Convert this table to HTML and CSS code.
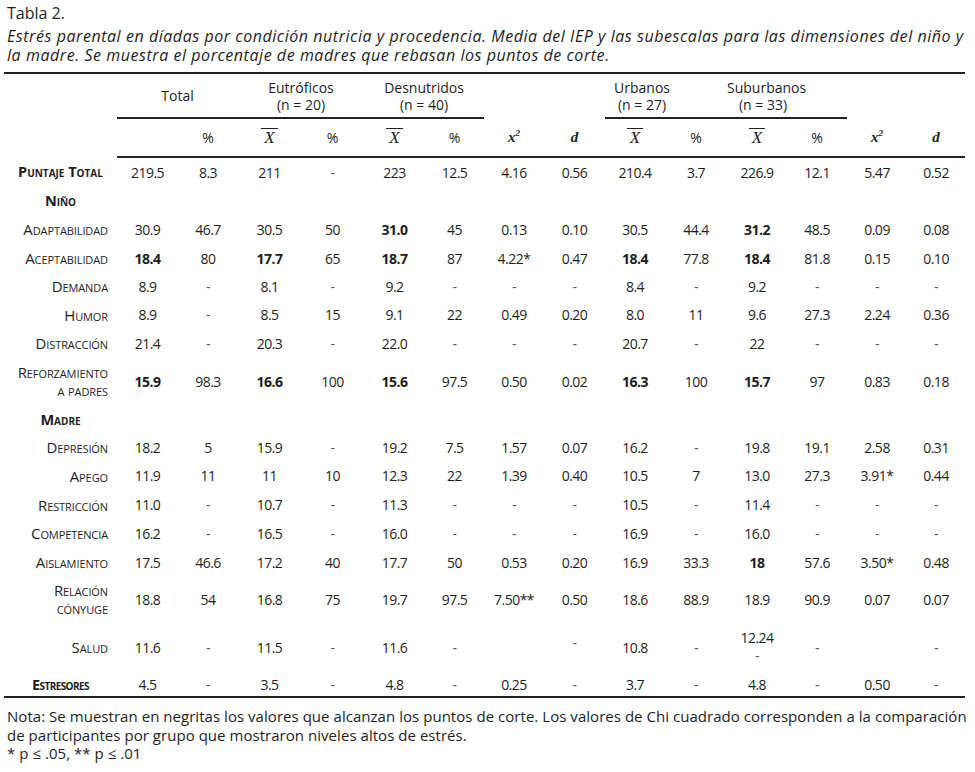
FILE: index.html
```html
<!DOCTYPE html>
<html lang="es">
<head>
<meta charset="utf-8">
<title>Tabla 2</title>
<link rel="stylesheet" href="styles.css">
</head>
<body>
<div class="page">
  <p class="title">Tabla 2.</p>
  <p class="caption">Estrés parental en díadas por condición nutricia y procedencia. Media del IEP y las subescalas para las dimensiones del niño y<br>la madre. Se muestra el porcentaje de madres que rebasan los puntos de corte.</p>
  <table class="data">
    <colgroup>
      <col class="w-label">
      <col class="w61"><col class="w60"><col class="w63"><col class="w63"><col class="w61"><col class="w59"><col class="w60">
      <col class="w61"><col class="w60"><col class="w62"><col class="w60"><col class="w60"><col class="w60"><col class="w58">
    </colgroup>
    <thead>
      <tr class="hrow1">
        <th></th>
        <th colspan="2" class="grp">Total</th>
        <th colspan="2" class="grp"><span class="gl">Eutróficos</span><span class="gl">(n = 20)</span></th>
        <th colspan="2" class="grp"><span class="gl">Desnutridos</span><span class="gl">(n = 40)</span></th>
        <th colspan="2"></th>
        <th colspan="2" class="grp shift"><span class="gl">Urbanos</span><span class="gl">(n = 27)</span></th>
        <th colspan="2" class="grp shift"><span class="gl">Suburbanos</span><span class="gl">(n = 33)</span></th>
        <th colspan="2"></th>
      </tr>
      <tr class="hrow2">
        <th></th>
        <th class="sub"></th>
        <th class="sub">%</th>
        <th class="sub"><span class="xbar">X</span></th>
        <th class="sub">%</th>
        <th class="sub"><span class="xbar">X</span></th>
        <th class="sub">%</th>
        <th class="sub stat">x<sup>2</sup></th>
        <th class="sub stat">d</th>
        <th class="sub"><span class="xbar">X</span></th>
        <th class="sub">%</th>
        <th class="sub"><span class="xbar">X</span></th>
        <th class="sub">%</th>
        <th class="sub stat">x<sup>2</sup></th>
        <th class="sub stat">d</th>
      </tr>
    </thead>
    <tbody>
      <tr class="r29">
        <th class="sect">Puntaje Total</th>
        <td>219.5</td><td>8.3</td><td>211</td><td class="dash">-</td><td>223</td><td>12.5</td><td>4.16</td><td>0.56</td>
        <td>210.4</td><td>3.7</td><td>226.9</td><td>12.1</td><td>5.47</td><td>0.52</td>
      </tr>
      <tr class="r28">
        <th class="sect">Niño</th>
        <td></td><td></td><td></td><td></td><td></td><td></td><td></td><td></td><td></td><td></td><td></td><td></td><td></td><td></td>
      </tr>
      <tr class="r30">
        <th class="lab">Adaptabilidad</th>
        <td>30.9</td><td>46.7</td><td>30.5</td><td>50</td><td class="b">31.0</td><td>45</td><td>0.13</td><td>0.10</td>
        <td>30.5</td><td>44.4</td><td class="b">31.2</td><td>48.5</td><td>0.09</td><td>0.08</td>
      </tr>
      <tr class="r28">
        <th class="lab">Aceptabilidad</th>
        <td class="b">18.4</td><td>80</td><td class="b">17.7</td><td>65</td><td class="b">18.7</td><td>87</td><td>4.22*</td><td>0.47</td>
        <td class="b">18.4</td><td>77.8</td><td class="b">18.4</td><td>81.8</td><td>0.15</td><td>0.10</td>
      </tr>
      <tr class="r28">
        <th class="lab">Demanda</th>
        <td>8.9</td><td class="dash">-</td><td>8.1</td><td class="dash">-</td><td>9.2</td><td class="dash">-</td><td class="dash">-</td><td class="dash">-</td>
        <td>8.4</td><td class="dash">-</td><td>9.2</td><td class="dash">-</td><td class="dash">-</td><td class="dash">-</td>
      </tr>
      <tr class="r29">
        <th class="lab">Humor</th>
        <td>8.9</td><td class="dash">-</td><td>8.5</td><td>15</td><td>9.1</td><td>22</td><td>0.49</td><td>0.20</td>
        <td>8.0</td><td>11</td><td>9.6</td><td>27.3</td><td>2.24</td><td>0.36</td>
      </tr>
      <tr class="r28">
        <th class="lab">Distracción</th>
        <td>21.4</td><td class="dash">-</td><td>20.3</td><td class="dash">-</td><td>22.0</td><td class="dash">-</td><td class="dash">-</td><td class="dash">-</td>
        <td>20.7</td><td class="dash">-</td><td>22</td><td class="dash">-</td><td class="dash">-</td><td class="dash">-</td>
      </tr>
      <tr class="r48">
        <th class="lab two">Reforzamiento<br>a padres</th>
        <td class="b">15.9</td><td>98.3</td><td class="b">16.6</td><td>100</td><td class="b">15.6</td><td>97.5</td><td>0.50</td><td>0.02</td>
        <td class="b">16.3</td><td>100</td><td class="b">15.7</td><td>97</td><td>0.83</td><td>0.18</td>
      </tr>
      <tr class="r28">
        <th class="sect">Madre</th>
        <td></td><td></td><td></td><td></td><td></td><td></td><td></td><td></td><td></td><td></td><td></td><td></td><td></td><td></td>
      </tr>
      <tr class="r28">
        <th class="lab">Depresión</th>
        <td>18.2</td><td>5</td><td>15.9</td><td class="dash">-</td><td>19.2</td><td>7.5</td><td>1.57</td><td>0.07</td>
        <td>16.2</td><td class="dash">-</td><td>19.8</td><td>19.1</td><td>2.58</td><td>0.31</td>
      </tr>
      <tr class="r29">
        <th class="lab">Apego</th>
        <td>11.9</td><td>11</td><td>11</td><td>10</td><td>12.3</td><td>22</td><td>1.39</td><td>0.40</td>
        <td>10.5</td><td>7</td><td>13.0</td><td>27.3</td><td>3.91*</td><td>0.44</td>
      </tr>
      <tr class="r29">
        <th class="lab">Restricción</th>
        <td>11.0</td><td class="dash">-</td><td>10.7</td><td class="dash">-</td><td>11.3</td><td class="dash">-</td><td class="dash">-</td><td class="dash">-</td>
        <td>10.5</td><td class="dash">-</td><td>11.4</td><td class="dash">-</td><td class="dash">-</td><td class="dash">-</td>
      </tr>
      <tr class="r28">
        <th class="lab">Competencia</th>
        <td>16.2</td><td class="dash">-</td><td>16.5</td><td class="dash">-</td><td>16.0</td><td class="dash">-</td><td class="dash">-</td><td class="dash">-</td>
        <td>16.9</td><td class="dash">-</td><td>16.0</td><td class="dash">-</td><td class="dash">-</td><td class="dash">-</td>
      </tr>
      <tr class="r30">
        <th class="lab">Aislamiento</th>
        <td>17.5</td><td>46.6</td><td>17.2</td><td>40</td><td>17.7</td><td>50</td><td>0.53</td><td>0.20</td>
        <td>16.9</td><td>33.3</td><td class="b">18</td><td>57.6</td><td>3.50*</td><td>0.48</td>
      </tr>
      <tr class="r44">
        <th class="lab two">Relación<br>cónyuge</th>
        <td>18.8</td><td>54</td><td>16.8</td><td>75</td><td>19.7</td><td>97.5</td><td>7.50**</td><td>0.50</td>
        <td>18.6</td><td>88.9</td><td>18.9</td><td>90.9</td><td>0.07</td><td>0.07</td>
      </tr>
      <tr class="r52">
        <th class="lab">Salud</th>
        <td>11.6</td><td class="dash">-</td><td>11.5</td><td class="dash">-</td><td>11.6</td><td class="dash">-</td><td></td><td class="dash raised">-</td>
        <td>10.8</td><td class="dash">-</td><td class="two">12.24<br><span class="dash">-</span></td><td class="dash">-</td><td></td><td class="dash">-</td>
      </tr>
      <tr class="r24 last">
        <th class="sect">Estresores</th>
        <td>4.5</td><td class="dash">-</td><td>3.5</td><td class="dash">-</td><td>4.8</td><td class="dash">-</td><td>0.25</td><td class="dash">-</td>
        <td>3.7</td><td class="dash">-</td><td>4.8</td><td class="dash">-</td><td>0.50</td><td class="dash">-</td>
      </tr>
    </tbody>
  </table>
  <p class="note">Nota: Se muestran en negritas los valores que alcanzan los puntos de corte. Los valores de Chi cuadrado corresponden a la comparación<br>de participantes por grupo que mostraron niveles altos de estrés.<br>* p ≤ .05, ** p ≤ .01</p>
</div>
</body>
</html>
```

FILE: styles.css
```css
html, body {
  margin: 0;
  padding: 0;
  background: #ffffff;
}

body {
  color: #1e1e1e;
  font-family: "Open Sans", "Noto Sans", sans-serif;
}

.page {
  width: 962px;
  padding: 4px 0 0 4px;
}

.title {
  margin: 0 0 0 3px;
  font-size: 16px;
  line-height: 19px;
}

.caption {
  margin: 4px 0 0 3px;
  font-size: 16px;
  line-height: 19px;
  font-style: italic;
  letter-spacing: 0.55px;
  white-space: nowrap;
}

.data {
  margin-top: 7px;
  width: 961px;
  table-layout: fixed;
  border-collapse: collapse;
  border-top: 2px solid #222;
  border-bottom: 2px solid #222;
  font-size: 14px;
}

.w-label { width: 113px; }
.w58 { width: 58px; }
.w59 { width: 59px; }
.w60 { width: 60px; }
.w61 { width: 61px; }
.w62 { width: 62px; }
.w63 { width: 63px; }

.data th,
.data td {
  padding: 0;
  text-align: center;
  vertical-align: middle;
  font-weight: normal;
  white-space: nowrap;
}

.data td {
  letter-spacing: -0.5px;
}

.hrow1 { height: 45px; }

.gl {
  display: block;
  line-height: 17px;
}

.grp {
  border-bottom: 2px solid #222;
}

.grp.shift {
  padding-right: 48px;
}

.hrow2 { height: 39px; }

.hrow2 .sub {
  border-bottom: 2px solid #222;
}

.xbar {
  display: inline-block;
  font-family: "Liberation Serif", serif;
  font-style: italic;
  font-size: 17px;
  line-height: 17px;
  padding: 0 3px;
  border-top: 1.5px solid #222;
}

.stat {
  font-family: "Liberation Serif", serif;
  font-weight: bold !important;
  font-style: italic;
  font-size: 15px;
}

.stat sup {
  font-size: 9px;
}

.r24 { height: 24px; }
.r28 { height: 28px; }
.r29 { height: 29px; }
.r30 { height: 30px; }
.r44 { height: 44px; }
.r48 { height: 48px; }
.r52 { height: 52px; }

.lab {
  text-align: right !important;
  padding-right: 9px !important;
  font-variant: small-caps;
  font-size: 15px;
  letter-spacing: -0.1px;
}

.two {
  line-height: 18px;
}

.sect {
  font-variant: small-caps;
  font-weight: bold !important;
  font-size: 14.5px;
}

.last .sect {
  letter-spacing: -0.6px;
}

.b {
  font-weight: bold !important;
}

.dash {
  color: #555;
}

.raised {
  vertical-align: top !important;
  padding-top: 12px !important;
}

.note {
  margin: 9px 0 0 3px;
  font-size: 15px;
  line-height: 18.5px;
  letter-spacing: 0.04px;
  white-space: nowrap;
}
```
